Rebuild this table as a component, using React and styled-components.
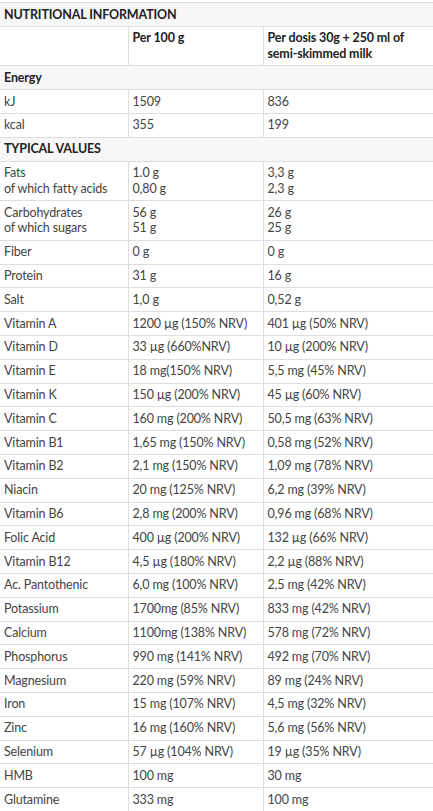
import React from "react";
import styled, { createGlobalStyle } from "styled-components";

const GlobalStyle = createGlobalStyle`
  body {
    margin: 0;
    background: #fff;
    font-family: Lato, "Liberation Sans", sans-serif;
  }
`;

const rows = [
  ["Fats\nof which fatty acids", "1.0 g\n0,80 g", "3,3 g\n2,3 g"],
  ["Carbohydrates\nof which sugars", "56 g\n51 g", "26 g\n25 g"],
  ["Fiber", "0 g", "0 g"],
  ["Protein", "31 g", "16 g"],
  ["Salt", "1,0 g", "0,52 g"],
  ["Vitamin A", "1200 µg (150% NRV)", "401 µg (50% NRV)"],
  ["Vitamin D", "33 µg (660%NRV)", "10 µg (200% NRV)"],
  ["Vitamin E", "18 mg(150% NRV)", "5,5 mg (45% NRV)"],
  ["Vitamin K", "150 µg (200% NRV)", "45 µg (60% NRV)"],
  ["Vitamin C", "160 mg (200% NRV)", "50,5 mg (63% NRV)"],
  ["Vitamin B1", "1,65 mg (150% NRV)", "0,58 mg (52% NRV)"],
  ["Vitamin B2", "2,1 mg (150% NRV)", "1,09 mg (78% NRV)"],
  ["Niacin", "20 mg (125% NRV)", "6,2 mg (39% NRV)"],
  ["Vitamin B6", "2,8 mg (200% NRV)", "0,96 mg (68% NRV)"],
  ["Folic Acid", "400 µg (200% NRV)", "132 µg (66% NRV)"],
  ["Vitamin B12", "4,5 µg (180% NRV)", "2,2 µg (88% NRV)"],
  ["Ac. Pantothenic", "6,0 mg (100% NRV)", "2,5 mg (42% NRV)"],
  ["Potassium", "1700mg (85% NRV)", "833 mg (42% NRV)"],
  ["Calcium", "1100mg (138% NRV)", "578 mg (72% NRV)"],
  ["Phosphorus", "990 mg (141% NRV)", "492 mg (70% NRV)"],
  ["Magnesium", "220 mg (59% NRV)", "89 mg (24% NRV)"],
  ["Iron", "15 mg (107% NRV)", "4,5 mg (32% NRV)"],
  ["Zinc", "16 mg (160% NRV)", "5,6 mg (56% NRV)"],
  ["Selenium", "57 µg (104% NRV)", "19 µg (35% NRV)"],
  ["HMB", "100 mg", "30 mg"],
  ["Glutamine", "333 mg", "100 mg"],
];

const Page = styled.div`
  padding-top: 2px;
`;

const Table = styled.table`
  width: 100%;
  border-collapse: collapse;
  table-layout: fixed;
  font-size: 12.5px;
  letter-spacing: -0.15px;
  line-height: 15.8px;
  color: #444;
`;

const Cell = styled.td`
  padding: 3.5px 4px;
  border: 1px solid #dedede;
  vertical-align: top;
  white-space: pre-line;
  font-weight: ${(p) => (p.$bold ? 700 : 400)};
  color: ${(p) => (p.$bold ? "#222" : "#444")};
  background: ${(p) => (p.$shade ? "#f7f7f7" : "#fff")};
  &:first-child {
    border-left: none;
  }
  &:last-child {
    border-right: none;
  }
`;

const Section = ({ children }) => (
  <tr>
    <Cell colSpan={3} $bold $shade>
      {children}
    </Cell>
  </tr>
);

const Row = ({ cells }) => (
  <tr>
    {cells.map((c, i) => (
      <Cell key={i}>{c}</Cell>
    ))}
  </tr>
);

export default function App() {
  return (
    <Page>
      <GlobalStyle />
      <Table>
        <colgroup>
          <col style={{ width: 128 }} />
          <col style={{ width: 135 }} />
          <col />
        </colgroup>
        <tbody>
          <Section>NUTRITIONAL INFORMATION</Section>
          <tr>
            <Cell />
            <Cell $bold>Per 100 g</Cell>
            <Cell $bold>Per dosis 30g + 250 ml of semi-skimmed milk</Cell>
          </tr>
          <Section>Energy</Section>
          <Row cells={["kJ", "1509", "836"]} />
          <Row cells={["kcal", "355", "199"]} />
          <Section>TYPICAL VALUES</Section>
          {rows.map((r) => (
            <Row key={r[0]} cells={r} />
          ))}
        </tbody>
      </Table>
    </Page>
  );
}
